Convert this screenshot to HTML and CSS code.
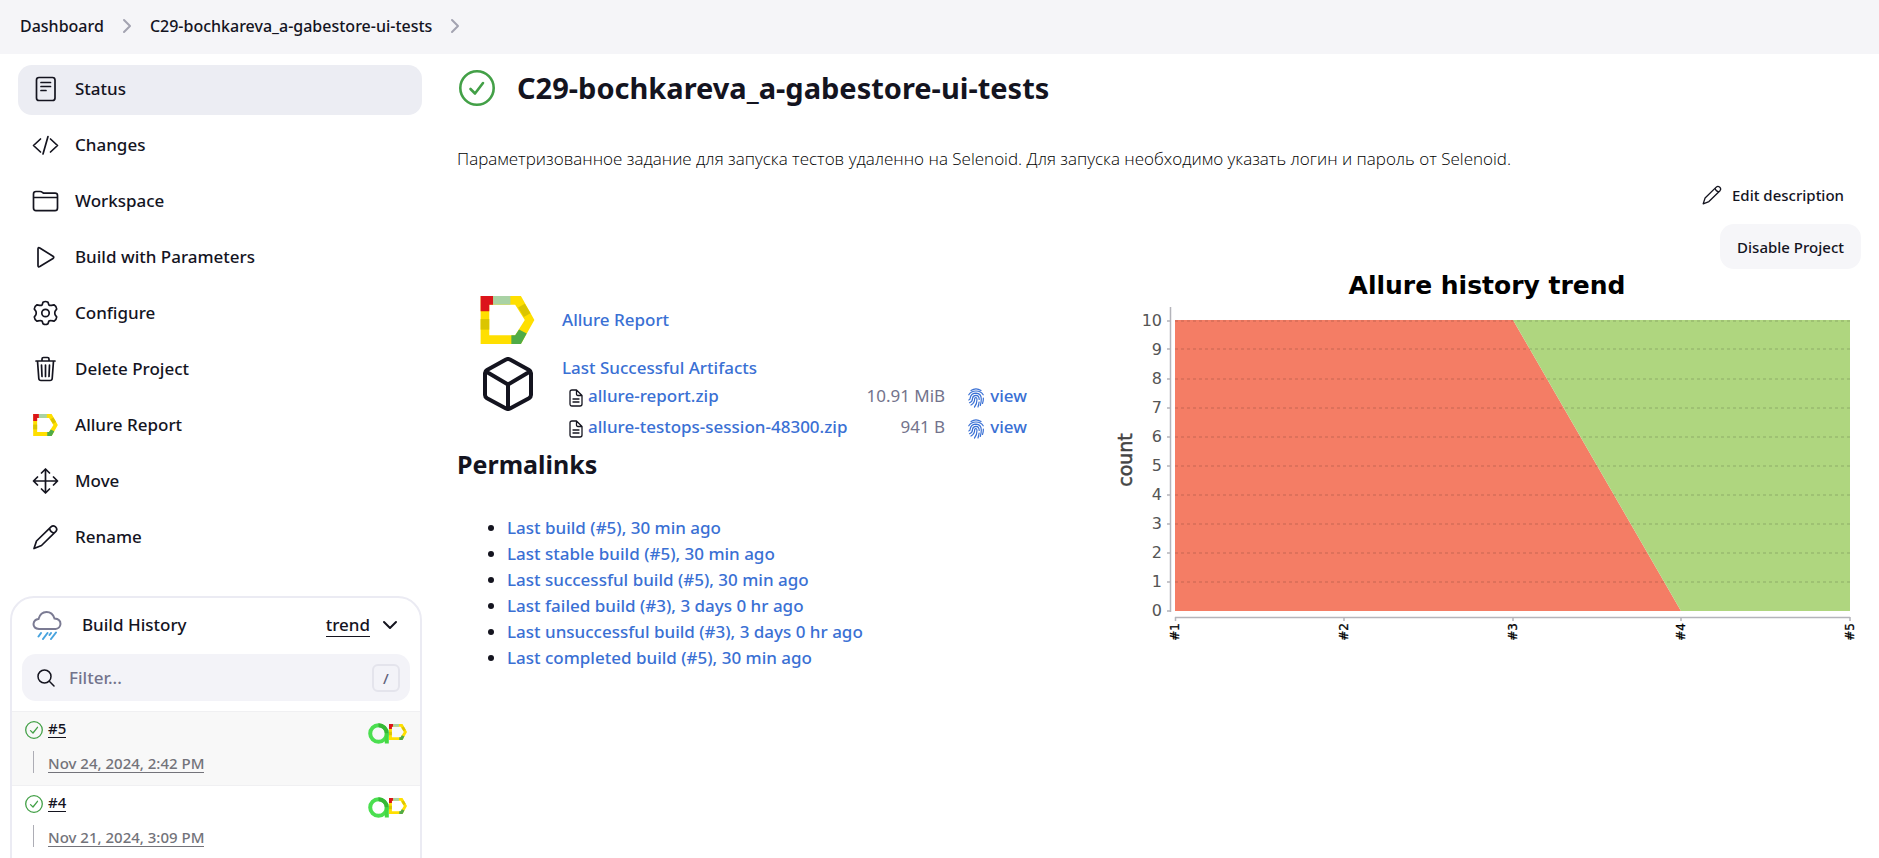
FILE: index.html
```html
<!DOCTYPE html>
<html lang="en">
<head>
<meta charset="utf-8">
<title>C29-bochkareva_a-gabestore-ui-tests [Jenkins]</title>
<link rel="stylesheet" href="styles.css">
</head>
<body>
<svg class="defs" width="0" height="0" aria-hidden="true">
  <symbol id="allure" viewBox="0 0 56 50">
    <g fill="#ffdf00">
      <path d="M0 0H42L56 25L42 50H0ZM9 9V41H36L46 25L36 9Z" fill-rule="evenodd"/>
    </g>
    <path d="M0 0H13V9H9V16H0Z" fill="#dc141a"/>
    <path d="M13 0H31V9H13Z" fill="#a9d2a4"/>
    <path d="M0 24H9V35H0Z" fill="#dbc500"/>
    <path d="M46 8L52 18L45 22L39 12Z" fill="#dbc500"/>
    <path d="M32 41H36L40 35L48 39L42 50H32Z" fill="#4fab47"/>
  </symbol>
  <symbol id="pencil" viewBox="0 0 26 26">
    <path d="M1.500 24.500L4 17L18.500 2.800Q20.500 1 22.800 2.600Q25.400 5 23.400 7.400L9 21.500ZM17 4.500Q18 8.500 21.800 9" fill="none" stroke="currentColor" stroke-linecap="round" stroke-linejoin="round" stroke-width="1.700"/>
  </symbol>
  <symbol id="ok" viewBox="0 0 36 36">
    <circle cx="18" cy="18" r="16.700" fill="none" stroke="#43a047" stroke-width="2.600"/>
    <path d="M11.500 19L16 23.500L24 13" fill="none" stroke="#43a047" stroke-width="2.600" stroke-linecap="round" stroke-linejoin="round"/>
  </symbol>
  <symbol id="ok-thin" viewBox="0 0 18 18">
    <circle cx="9" cy="9" r="8.300" fill="none" stroke="#43a047" stroke-width="1.300"/>
    <path d="M5.500 9.600L8 12L12.500 6.300" fill="none" stroke="#43a047" stroke-width="1.300" stroke-linecap="round" stroke-linejoin="round"/>
  </symbol>
  <symbol id="file" viewBox="0 0 14 18">
    <path d="M1 3Q1 1 3 1H7.500L13 6.500V15Q13 17 11 17H3Q1 17 1 15ZM7.500 1V5Q7.500 6.500 9 6.500H13M4 10H10M4 13H10" fill="none" stroke="currentColor" stroke-width="1.300" stroke-linejoin="round" stroke-linecap="round"/>
  </symbol>
  <symbol id="finger" viewBox="0 0 16 20">
    <g fill="none" stroke="currentColor" stroke-width="1.200" stroke-linecap="round">
      <path d="M3 2.500Q8-.8 13 2.500M.8 6.800Q3 3 8 3Q13 3 15.200 6.800M15.300 10Q15.500 13 14.500 15.500M.8 12Q2.400 11.500 2.300 9.500Q3.300 5.200 8 5.200Q13.200 5.500 13.300 11Q13.300 14.500 12.300 17.500"/>
      <path d="M1.500 14.700Q4.600 13.500 4.500 10.500Q4.800 7.500 8 7.400Q11.200 7.500 11.200 11.500M11.100 14Q10.800 16.500 10 19M3 17Q6.700 15 6.700 10.500Q7 9.500 8 9.500Q9 9.600 9 11.500Q9 16 6.500 19"/>
    </g>
  </symbol>
  <symbol id="testops" viewBox="0 0 21 21">
    <circle cx="10.500" cy="10.500" r="8.300" fill="none" stroke="#4bdf50" stroke-width="4"/>
    <path d="M10.500 2.200A8.300 8.300 0 0 1 18.800 10.500" fill="none" stroke="#36b836" stroke-width="4"/>
    <path d="M18.800 10.500V20.500" stroke="#43d843" stroke-width="4"/>
  </symbol>
  <symbol id="chev" viewBox="0 0 10 16">
    <path d="M2 2L8 8L2 14" fill="none" stroke="currentColor" stroke-width="2" stroke-linecap="round" stroke-linejoin="round"/>
  </symbol>
</svg>

<nav class="crumbs" aria-label="Breadcrumbs">
  <a href="#">Dashboard</a>
  <svg class="chev"><use href="#chev"/></svg>
  <a href="#">C29-bochkareva_a-gabestore-ui-tests</a>
  <svg class="chev"><use href="#chev"/></svg>
</nav>

<div class="page">
  <aside class="side">
    <nav class="tasks" aria-label="Project">
      <a class="task active" href="#"><svg viewBox="0 0 26 26"><path d="M6.500 1.500H20Q22.500 1.500 22.500 4V22Q22.500 24.500 20 24.500H6.500Q4 24.500 4 22V4Q4 1.500 6.500 1.500ZM8.500 6.500H18M8.500 10.500H18M8.500 14.500H13.500"/></svg>Status</a>
      <a class="task" href="#"><svg viewBox="0 0 26 26"><path d="M8 7L1 13.500L8 20M18 7L25 13.500L18 20M15.500 4.500L10.500 22"/></svg>Changes</a>
      <a class="task" href="#"><svg viewBox="0 0 26 26"><path d="M1 20V6Q1 3.500 3.500 3.500H7.500Q9 3.500 10 4.500Q11 5.200 12.500 5.200H22.500Q25 5.200 25 7.500V20Q25 22.700 22.500 22.700H3.500Q1 22.700 1 20ZM1 9.500H25"/></svg>Workspace</a>
      <a class="task" href="#"><svg viewBox="0 0 26 26"><path d="M5.500 5V21.500Q5.500 23.500 7.300 22.500L20.500 14.500Q22 13.300 20.500 12.200L7.300 4Q5.500 3 5.500 5Z"/></svg>Build with Parameters</a>
      <a class="task" href="#"><svg viewBox="0 0 26 26"><circle cx="13" cy="13" r="3.700"/><path d="M10.500 2.300Q13 .7 15.500 2.300L16.300 4.800Q17.500 5.800 19 5.300L21.500 4.800Q24 6.300 24.200 9L22.600 11.200Q22 13 22.600 14.800L24.200 17Q24 19.700 21.500 21.200L19 20.700Q17.500 20.200 16.300 21.200L15.500 23.700Q13 25.300 10.500 23.700L9.700 21.200Q8.500 20.200 7 20.700L4.500 21.200Q2 19.700 1.800 17L3.400 14.800Q4 13 3.400 11.200L1.800 9Q2 6.300 4.500 4.800L7 5.300Q8.500 5.800 9.700 4.800Z"/></svg>Configure</a>
      <a class="task" href="#"><svg viewBox="0 0 26 26"><path d="M3.500 5H22.500M5 5L6.300 22.500Q6.500 24.500 8.500 24.500H17.500Q19.500 24.500 19.700 22.500L21 5M9.500 5V3Q9.500 1.500 11 1.500H15Q16.500 1.500 16.500 3V5M13 9V20.500M9 9L9.500 20.500M17 9L16.500 20.500"/></svg>Delete Project</a>
      <a class="task" href="#"><svg><use href="#allure" y="2" height="22"/></svg>Allure Report</a>
      <a class="task" href="#"><svg viewBox="0 0 26 26"><path d="M13 1.500V24.500M1.500 13H24.500M9 5L13 1L17 5M9 21L13 25L17 21M5 9L1 13L5 17M21 9L25 13L21 17"/></svg>Move</a>
      <a class="task" href="#"><svg><use href="#pencil"/></svg>Rename</a>
    </nav>

    <section class="history">
      <header class="history-head">
        <svg class="weather" viewBox="0 0 30 30"><path d="M7 19Q1.500 18.500 1.500 14Q2 9.500 6.500 9Q8.500 2 14.500 2Q20.500 2 22.500 8.500Q28.500 9 28.500 14Q28 18.500 23.500 19Z" fill="none" stroke="#7b7b93" stroke-width="2"/><path d="M9 23L6.500 26.500M15.500 23L11 29M19 23L17.500 25M24 22.500L19 29" stroke="#47a3de" stroke-width="2" stroke-linecap="round"/></svg>
        <h2>Build History</h2>
        <a class="trend" href="#">trend</a>
        <button class="toggle" type="button" aria-label="Collapse"><svg viewBox="0 0 16 10"><path d="M2 2L8 8L14 2" fill="none" stroke="currentColor" stroke-width="2" stroke-linecap="round" stroke-linejoin="round"/></svg></button>
      </header>
      <label class="filter">
        <svg viewBox="0 0 18 18"><circle cx="7.500" cy="7.500" r="6.500"/><path d="M12.300 12.300L17 17"/></svg>
        <input type="text" placeholder="Filter..." aria-label="Filter builds">
        <kbd>/</kbd>
      </label>
      <article class="build shaded">
        <svg class="build-ok"><use href="#ok-thin"/></svg>
        <a class="num" href="#">#5</a>
        <span class="badges"><svg class="b1"><use href="#testops"/></svg><svg class="b2"><use href="#allure"/></svg></span>
        <span class="bar"></span>
        <a class="date" href="#">Nov 24, 2024, 2:42 PM</a>
      </article>
      <article class="build">
        <svg class="build-ok"><use href="#ok-thin"/></svg>
        <a class="num" href="#">#4</a>
        <span class="badges"><svg class="b1"><use href="#testops"/></svg><svg class="b2"><use href="#allure"/></svg></span>
        <span class="bar"></span>
        <a class="date" href="#">Nov 21, 2024, 3:09 PM</a>
      </article>
    </section>
  </aside>

  <main class="main">
    <header class="title">
      <svg><use href="#ok"/></svg>
      <h1>C29-bochkareva_a-gabestore-ui-tests</h1>
    </header>
    <p class="desc">Параметризованное задание для запуска тестов удаленно на Selenoid. Для запуска необходимо указать логин и пароль от Selenoid.</p>
    <div class="actions">
      <a class="edit" href="#"><svg><use href="#pencil"/></svg>Edit description</a>
      <button class="disable" type="button">Disable Project</button>
    </div>
    <div class="cols">
      <div class="left">
        <div class="row report">
          <svg class="big-allure"><use href="#allure"/></svg>
          <a href="#">Allure Report</a>
        </div>
        <div class="row">
          <svg class="cube" viewBox="0 0 50 54"><path d="M23 2.500Q25 1.500 27 2.500L46 13Q48 14.200 48 16V38Q48 40 46 41.200L27 51.500Q25 52.500 23 51.500L4 41.200Q2 40 2 38V16Q2 14.200 4 13ZM3 14.500L25 27.500L47 14.500M25 27.500V51.500" fill="none" stroke="currentColor" stroke-width="4" stroke-linejoin="round"/></svg>
          <div>
            <a class="artifacts" href="#">Last Successful Artifacts</a>
            <table class="files">
              <tr><td><svg class="file"><use href="#file"/></svg><a href="#">allure-report.zip</a></td><td class="size">10.91 MiB</td><td class="view"><svg class="finger"><use href="#finger"/></svg><a href="#">view</a></td></tr>
              <tr><td><svg class="file"><use href="#file"/></svg><a href="#">allure-testops-session-48300.zip</a></td><td class="size">941 B</td><td class="view"><svg class="finger"><use href="#finger"/></svg><a href="#">view</a></td></tr>
            </table>
          </div>
        </div>
        <h2 class="perma">Permalinks</h2>
        <ul class="links">
          <li><a href="#">Last build (#5), 30 min ago</a></li>
          <li><a href="#">Last stable build (#5), 30 min ago</a></li>
          <li><a href="#">Last successful build (#5), 30 min ago</a></li>
          <li><a href="#">Last failed build (#3), 3 days 0 hr ago</a></li>
          <li><a href="#">Last unsuccessful build (#3), 3 days 0 hr ago</a></li>
          <li><a href="#">Last completed build (#5), 30 min ago</a></li>
        </ul>
      </div>
      <svg class="chart" viewBox="0 0 750 375" role="img" aria-label="Allure history trend">
        <text class="c-title" x="376" y="25" text-anchor="middle">Allure history trend</text>
        <text class="c-axis" transform="translate(21 191) rotate(-90)" text-anchor="middle">count</text>
        <path d="M64 51H402L570 342H64Z" fill="#f47d65"/>
        <path d="M402 51H739V342H570Z" fill="#afd67f"/>
        <path d="M64 52H739M64 80H739M64 110H739M64 139H739M64 168H739M64 197H739M64 226H739M64 255H739M64 284H739M64 313H739" stroke="#000" stroke-opacity=".13" stroke-width="1.500" stroke-dasharray="3 3"/>
        <path d="M59.500 38V343M56 52H59M56 80H59M56 110H59M56 139H59M56 168H59M56 197H59M56 226H59M56 255H59M56 284H59M56 313H59M56 342H59M64 348.500H739M64.500 348V352M233 348V352M402 348V352M570 348V352M739 348V352" fill="none" stroke="#b4b4ba" stroke-width="1.500"/>
        <g class="c-y" text-anchor="end">
          <text x="51" y="57">10</text><text x="51" y="86">9</text><text x="51" y="115">8</text><text x="51" y="144">7</text><text x="51" y="173">6</text><text x="51" y="202">5</text><text x="51" y="231">4</text><text x="51" y="260">3</text><text x="51" y="289">2</text><text x="51" y="318">1</text><text x="51" y="347">0</text>
        </g>
        <g class="c-x" text-anchor="end">
          <text transform="translate(68 354) rotate(-90)">#1</text><text transform="translate(237 354) rotate(-90)">#2</text><text transform="translate(406 354) rotate(-90)">#3</text><text transform="translate(574 354) rotate(-90)">#4</text><text transform="translate(743 354) rotate(-90)">#5</text>
        </g>
      </svg>
    </div>
  </main>
</div>
</body>
</html>
```
FILE: styles.css
```css
* { box-sizing: border-box; }
html, body { height: 100%; }
body {
  margin: 0;
  display: flex;
  flex-direction: column;
  overflow: hidden;
  background: #fff;
  color: #14141f;
  font: 500 17px/26px "Noto Sans", "Open Sans", sans-serif;
}
a { color: #3a70d4; text-decoration: none; }
svg { flex: none; display: block; }
h1, h2, p, ul { margin: 0; }
.defs { position: absolute; }

.crumbs {
  display: flex;
  align-items: center;
  gap: 18px;
  height: 54px;
  flex: none;
  padding: 0 20px 2px;
  background: #f5f5f8;
  font-size: 16px;
}
.crumbs a { color: inherit; }
.chev { width: 10px; height: 16px; color: #a3a3b1; }

.page { display: flex; flex: 1; min-height: 0; }
.side { width: 422px; flex: none; padding-top: 11px; }
.tasks { display: flex; flex-direction: column; gap: 6px; padding-left: 18px; }
.task {
  display: flex;
  align-items: center;
  gap: 16px;
  height: 50px;
  padding: 0 14px 2px;
  border-radius: 14px;
  color: inherit;
}
.task svg { width: 27px; height: 26px; fill: none; stroke: currentColor; stroke-width: 1.7; stroke-linecap: round; stroke-linejoin: round; }
.task use { stroke: none; }
.active { background: #ecedf3; }

.history {
  margin: 33px 0 0 10px;
  border: 2px solid #ebebf3;
  border-radius: 24px 24px 0 0;
  overflow: hidden;
}
.history-head { display: flex; align-items: center; height: 56px; padding: 0 22px 2px 20px; }
.weather { width: 30px; height: 30px; margin-right: 20px; }
.history-head h2 { flex: 1; font-size: 17px; font-weight: 500; }
.trend { color: inherit; border-bottom: 1px solid; line-height: 22px; }
.toggle { width: 16px; height: 26px; margin-left: 12px; padding: 0; border: 0; background: none; color: inherit; }
.toggle svg { width: 16px; height: 10px; }
.filter {
  display: flex;
  align-items: center;
  gap: 14px;
  height: 47px;
  margin: 0 10px 10px;
  padding: 0 10px 0 15px;
  border-radius: 14px;
  background: #f3f3f8;
}
.filter svg { width: 18px; height: 18px; fill: none; stroke: currentColor; stroke-width: 1.5; stroke-linecap: round; }
.filter input { flex: 1; min-width: 0; padding: 0; border: 0; outline: 0; background: none; font: inherit; color: inherit; }
.filter input::placeholder { color: #73738c; opacity: 1; }
.filter kbd { width: 28px; height: 28px; border: 2px solid #e4e4ec; border-radius: 6px; color: #60607a; font: inherit; font-size: 15px; line-height: 24px; text-align: center; }
.build {
  display: grid;
  grid-template-columns: 18px 1fr auto;
  grid-template-rows: 33px 24px;
  column-gap: 5px;
  height: 74px;
  padding: 6px 13px 0;
  border-top: 1px solid #f0f0f2;
  font-size: 15px;
}
.shaded { background: #f8f8f8; }
.build > * { justify-self: start; }
.build-ok { width: 18px; height: 18px; margin-top: 3px; }
.num { color: inherit; border-bottom: 1px solid; height: 20px; line-height: 20px; }
.badges { display: flex; margin-top: 5px; }
.b1 { width: 21px; height: 21px; }
.b2 { width: 18px; height: 18px; }
.bar { width: 1px; height: 22px; margin-left: 8px; background: #adadb5; }
.date { height: 22px; line-height: 24px; color: #73737a; border-bottom: 1px solid; }

.main { flex: 1; min-width: 0; padding: 12px 18px 0 35px; }
.title { display: flex; align-items: center; gap: 22px; height: 46px; padding: 0 0 2px 2px; }
.title svg { width: 36px; height: 36px; }
h1 { font-size: 29px; line-height: 36px; font-weight: 700; }
.desc { margin-top: 34px; font-family: "Open Sans", "Noto Sans", sans-serif; font-weight: 300; color: #000; }
.actions { display: flex; flex-direction: column; align-items: flex-end; gap: 16px; margin-top: 10px; font-size: 15px; }
.edit { display: flex; align-items: center; gap: 10px; padding-right: 17px; color: inherit; }
.edit svg { width: 20px; height: 20px; }
.disable { height: 45px; padding: 0 17px; border: 0; border-radius: 14px; background: #f6f6f9; font: inherit; color: inherit; }

.cols { display: flex; justify-content: space-between; }
.left { padding-top: 27px; }
.row { display: flex; align-items: flex-start; gap: 29px; padding-left: 26px; }
.report { align-items: center; gap: 27px; padding-left: 23px; margin-bottom: 13px; }
.big-allure { width: 55px; height: 48px; }
.cube { width: 50px; height: 54px; }
.artifacts { display: block; line-height: 22px; }
.files { border-collapse: collapse; margin-top: 1px; }
.files td { height: 31px; padding: 0; }
.files td:first-child { display: flex; align-items: center; gap: 5px; padding-left: 7px; }
.file { width: 14px; height: 18px; margin-top: 4px; }
.files .size { padding-left: 19px; text-align: right; font-weight: 400; color: #73738c; }
.files .view { padding-left: 23px; }
.view a { margin-left: 6px; }
.finger { display: inline-block; width: 16px; height: 20px; vertical-align: -6px; color: #3a70d4; }
.perma { margin-top: 5px; font-size: 25px; line-height: 34px; font-weight: 700; }
.links { margin-top: 34px; padding-left: 50px; }
.links li { line-height: 26px; }
.chart { width: 750px; height: 375px; font-family: "DejaVu Sans", sans-serif; }
.c-title { font-size: 25px; font-weight: 700; }
.c-axis { font-size: 19px; fill: #444; stroke: #444; stroke-width: .5; }
.c-y { font-size: 16px; font-weight: 400; fill: #555; }
.c-x { font-size: 12px; stroke: #000; stroke-width: .3; }
```
